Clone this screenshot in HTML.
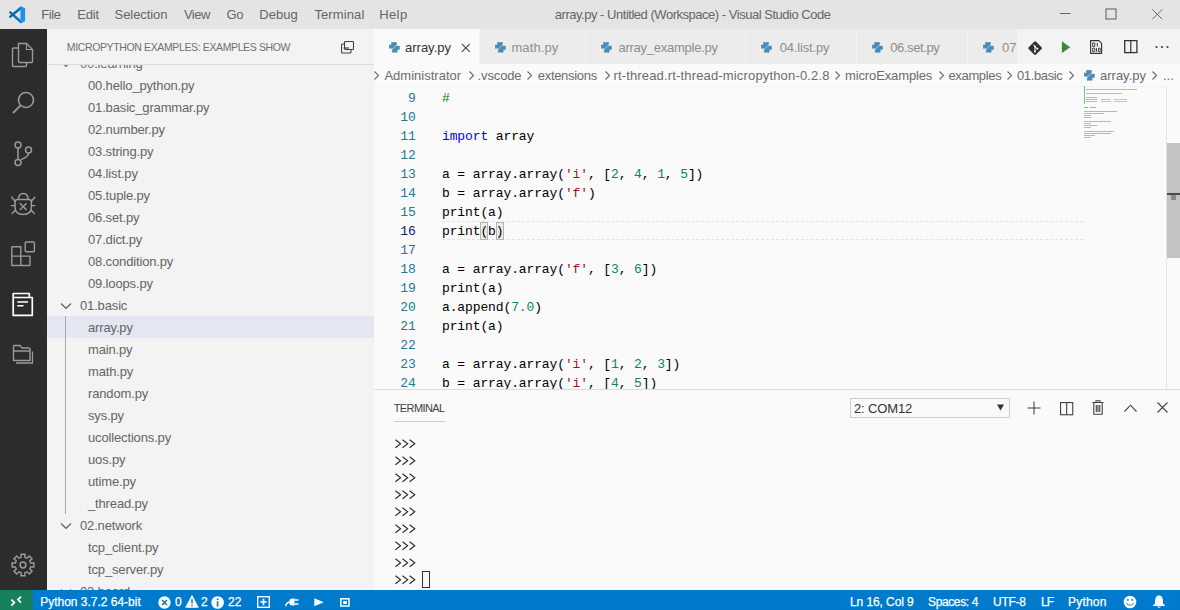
<!DOCTYPE html>
<html><head><meta charset="utf-8">
<style>
*{margin:0;padding:0;box-sizing:border-box}
html,body{width:1180px;height:610px;overflow:hidden;background:#fafafa;font-family:"Liberation Sans",sans-serif}
.abs{position:absolute}
svg{position:absolute;display:block}
#title{left:0;top:0;width:1180px;height:29px;background:#e4e4e4;color:#666;font-size:13px}
#title .m{position:absolute;top:7px;white-space:nowrap}
#act{left:0;top:29px;width:47px;height:561px;background:#2c2c2c}
#side{left:47px;top:29px;width:327px;height:561px;background:#f3f3f3;overflow:hidden}
#side .hdrbg{position:absolute;left:0;top:0;width:327px;height:35px;background:#f3f3f3;box-shadow:0 1px 1px #dedede;z-index:2}
#side .hdr{position:absolute;top:11.8px;font-size:10.5px;color:#717171;white-space:nowrap}
#side .row{position:absolute;height:22px;line-height:22px;font-size:13px;color:#656565;white-space:nowrap;letter-spacing:-0.15px}
#side .selrow{position:absolute;left:0;width:327px;height:22px;background:#e4e6f1}
#side .chev{position:absolute;left:13px}
#side .guide{position:absolute;left:18px;width:1px;background:#a9a9a9}
#tabs{left:374px;top:29px;width:806px;height:35px;background:#f3f3f3}
.tab{position:absolute;top:0;height:35px;background:#ececec;border-right:1px solid #f3f3f3;font-size:13px;color:#8e8e8e;line-height:35px;white-space:nowrap}
.tab span{position:absolute;top:0.7px}
.pyw{position:absolute;width:12px;height:13px}
#crumb{left:374px;top:64px;width:806px;height:22px;background:#fafafa;font-size:13px;color:#6c6c6c;line-height:22px;white-space:nowrap}
#crumb span{position:absolute;top:1px}
#crumb .gt{position:absolute;top:7px}
#code{left:374px;top:86px;width:806px;height:303px;background:#fafafa;overflow:hidden}
.ln{position:absolute;left:0;width:41.6px;text-align:right;font-family:"Liberation Mono",monospace;font-size:13px;letter-spacing:-0.12px;color:#237893;height:19px;line-height:19px}
.ln.cur{color:#0b216f}
.cl{position:absolute;left:68px;font-family:"Liberation Mono",monospace;font-size:13px;letter-spacing:-0.12px;color:#000;height:19px;line-height:19px;white-space:pre}
.k{color:#0000ff}.s{color:#a31515}.n{color:#09885a}.c{color:#008000}
#panel{left:374px;top:389px;width:806px;height:201px;background:#fafafa;border-top:1px solid #dcdcdc}
.tl{position:absolute;left:21px;font-family:"Liberation Mono",monospace;font-size:13px;letter-spacing:-0.12px;color:#333;height:17px;line-height:17px;white-space:pre}
#status{left:0;top:590px;width:1180px;height:20px;background:#007acc;color:#fff;font-size:12px;line-height:20px;white-space:nowrap}
#status span{position:absolute;top:1.5px;-webkit-text-stroke:0.25px #fff}
</style></head><body>

<div id="title" class="abs">
  <svg style="left:4px;top:2.7px" width="26" height="26" viewBox="0 0 26 26"><path d="M6.3 9.4 L17 19" stroke="#0a74c4" stroke-width="2.5" stroke-linecap="round"/><path d="M6.3 13.6 L17 4.8" stroke="#0868b0" stroke-width="2.5" stroke-linecap="round"/><path d="M16.4 4.3 L18 3.7 L21.1 5.2 V18.3 L18 19.8 L16.4 19.3 Z" fill="#1c93e8"/></svg>
  <span class="m" style="left:41.20px;letter-spacing:-0.400px">File</span>
  <span class="m" style="left:77.30px;letter-spacing:-0.233px">Edit</span>
  <span class="m" style="left:114.60px;letter-spacing:-0.075px">Selection</span>
  <span class="m" style="left:183.90px;letter-spacing:-0.467px">View</span>
  <span class="m" style="left:226.60px;letter-spacing:-0.400px">Go</span>
  <span class="m" style="left:259.20px;letter-spacing:0.075px">Debug</span>
  <span class="m" style="left:314.40px;letter-spacing:0.114px">Terminal</span>
  <span class="m" style="left:379.20px;letter-spacing:0.400px">Help</span>
  <span class="m" style="left:554.80px;letter-spacing:-0.478px">array.py - Untitled (Workspace) - Visual Studio Code</span>
  <svg style="left:1060px;top:13px" width="11" height="2"><rect width="10.5" height="1" fill="#666"/></svg>
  <svg style="left:1105px;top:8px" width="12" height="12"><rect x="1" y="1" width="10" height="10" fill="none" stroke="#666" stroke-width="1.1"/></svg>
  <svg style="left:1152px;top:9px" width="11" height="11"><path d="M0.3 0.3 L10.3 10.3 M10.3 0.3 L0.3 10.3" stroke="#666" stroke-width="1"/></svg>
</div>

<div id="act" class="abs">
  <!-- explorer -->
  <svg style="left:11px;top:13px" width="24" height="26" viewBox="0 0 24 26"><path d="M7.5 1.5 H15.5 L21.5 7.5 V19.5 Q21.5 20.5 20.5 20.5 H8.5 Q7.5 20.5 7.5 19.5 Z" fill="none" stroke="#999" stroke-width="1.4"/><path d="M15.5 1.5 V7.5 H21.5" fill="none" stroke="#999" stroke-width="1.2"/><path d="M7.5 6 H2.5 Q1.5 6 1.5 7 V23.5 Q1.5 24.5 2.5 24.5 H14.5 Q15.5 24.5 15.5 23.5 V20.5" fill="none" stroke="#999" stroke-width="1.4"/></svg>
  <!-- search -->
  <svg style="left:11px;top:60px" width="26" height="26" viewBox="0 0 26 26"><circle cx="15" cy="11" r="7.5" fill="none" stroke="#999" stroke-width="1.6"/><path d="M9.6 16.4 L2 24" stroke="#999" stroke-width="1.8"/></svg>
  <!-- scm -->
  <svg style="left:11px;top:110px" width="24" height="28" viewBox="0 0 24 28"><circle cx="7" cy="6" r="3" fill="none" stroke="#999" stroke-width="1.5"/><circle cx="17.5" cy="11" r="3" fill="none" stroke="#999" stroke-width="1.5"/><circle cx="7" cy="23.4" r="3" fill="none" stroke="#999" stroke-width="1.5"/><path d="M7 9 V20.4 M17.5 14 Q17.5 18 10 20.6" fill="none" stroke="#999" stroke-width="1.5"/></svg>
  <!-- debug -->
  <svg style="left:10px;top:162px" width="27" height="26" viewBox="0 0 27 26"><path d="M8.3 9 Q8.3 2.6 13.2 2.6 Q18.1 2.6 18.1 9" fill="none" stroke="#999" stroke-width="1.5"/><path d="M5 11 Q5 8.6 7.5 8.6 H19 Q21.4 8.6 21.4 11 V16 Q21.4 23.5 13.2 23.5 Q5 23.5 5 16 Z" fill="none" stroke="#999" stroke-width="1.5"/><path d="M9.8 12.2 L16.6 19 M16.6 12.2 L9.8 19" stroke="#999" stroke-width="1.5"/><path d="M5.2 10.5 L1.3 5.8 M21.2 10.5 L25.1 5.8 M5 14.6 H1 M21.4 14.6 H25.4 M5.6 18.8 L1.8 23 M20.8 18.8 L24.6 23" stroke="#999" stroke-width="1.4"/></svg>
  <!-- extensions -->
  <svg style="left:10px;top:211px" width="26" height="27" viewBox="0 0 26 27"><path d="M1.8 6.7 H10.8 V16.1 H1.8 Z M1.8 16.1 H10.8 V25.5 H1.8 Z M10.8 16.1 H20 V25.5 H10.8 Z" fill="none" stroke="#999" stroke-width="1.4" stroke-linejoin="round"/><rect x="15.2" y="2" width="9.2" height="9.8" rx="1" fill="none" stroke="#999" stroke-width="1.4"/></svg>
  <!-- active: micropython -->
  <svg style="left:11px;top:262px" width="24" height="26" viewBox="0 0 24 26"><path d="M2.2 24.4 V2.5 H18.3 V6.5 H21.3 V24.4 Z M2.2 6.5 H21.3" fill="none" stroke="#fff" stroke-width="1.7" stroke-linejoin="round"/><path d="M6.3 11 H17 M6.3 14.8 H12.5" stroke="#fff" stroke-width="1.6"/></svg>
  <!-- folder -->
  <svg style="left:11px;top:314px" width="24" height="22" viewBox="0 0 24 22"><path d="M2.5 17.5 V3.5 Q2.5 2.5 3.5 2.5 H9 L11 5 H18 Q19 5 19 6 V17.5 Z M2.5 8 H19" fill="none" stroke="#999" stroke-width="1.4"/><path d="M5 20 H21.5 V8.5" fill="none" stroke="#999" stroke-width="1.3"/></svg>
  <!-- gear -->
  <svg style="left:10px;top:523px" width="26" height="26" viewBox="0 0 26 26"><path d="M11.09 5.33 L11.09 2.17 L14.91 2.17 L14.91 5.33 L17.07 6.23 L19.31 3.99 L22.01 6.69 L19.77 8.93 L20.67 11.09 L23.83 11.09 L23.83 14.91 L20.67 14.91 L19.77 17.07 L22.01 19.31 L19.31 22.01 L17.07 19.77 L14.91 20.67 L14.91 23.83 L11.09 23.83 L11.09 20.67 L8.93 19.77 L6.69 22.01 L3.99 19.31 L6.23 17.07 L5.33 14.91 L2.17 14.91 L2.17 11.09 L5.33 11.09 L6.23 8.93 L3.99 6.69 L6.69 3.99 L8.93 6.23 Z" fill="none" stroke="#999" stroke-width="1.5" stroke-linejoin="miter"/><circle cx="13" cy="13" r="2.9" fill="none" stroke="#999" stroke-width="1.5"/></svg>
</div>

<div id="side" class="abs">
  <svg class="chev" style="top:31px" width="12" height="8" viewBox="0 0 12 8"><path d="M1 1.5 L6 6.3 L11 1.5" fill="none" stroke="#646465" stroke-width="1.2"/></svg>
<div class="row" style="left:33px;top:24px">00.learning</div>
<div class="row" style="left:41px;top:46px">00.hello_python.py</div>
<div class="row" style="left:41px;top:68px">01.basic_grammar.py</div>
<div class="row" style="left:41px;top:90px">02.number.py</div>
<div class="row" style="left:41px;top:112px">03.string.py</div>
<div class="row" style="left:41px;top:134px">04.list.py</div>
<div class="row" style="left:41px;top:156px">05.tuple.py</div>
<div class="row" style="left:41px;top:178px">06.set.py</div>
<div class="row" style="left:41px;top:200px">07.dict.py</div>
<div class="row" style="left:41px;top:222px">08.condition.py</div>
<div class="row" style="left:41px;top:244px">09.loops.py</div>
<svg class="chev" style="top:273px" width="12" height="8" viewBox="0 0 12 8"><path d="M1 1.5 L6 6.3 L11 1.5" fill="none" stroke="#646465" stroke-width="1.2"/></svg>
<div class="row" style="left:33px;top:266px">01.basic</div>
<div class="selrow" style="top:287px"></div>
<div class="row" style="left:41px;top:288px">array.py</div>
<div class="row" style="left:41px;top:310px">main.py</div>
<div class="row" style="left:41px;top:332px">math.py</div>
<div class="row" style="left:41px;top:354px">random.py</div>
<div class="row" style="left:41px;top:376px">sys.py</div>
<div class="row" style="left:41px;top:398px">ucollections.py</div>
<div class="row" style="left:41px;top:420px">uos.py</div>
<div class="row" style="left:41px;top:442px">utime.py</div>
<div class="row" style="left:41px;top:464px">_thread.py</div>
<svg class="chev" style="top:493px" width="12" height="8" viewBox="0 0 12 8"><path d="M1 1.5 L6 6.3 L11 1.5" fill="none" stroke="#646465" stroke-width="1.2"/></svg>
<div class="row" style="left:33px;top:486px">02.network</div>
<div class="row" style="left:41px;top:508px">tcp_client.py</div>
<div class="row" style="left:41px;top:530px">tcp_server.py</div>
<svg class="chev" style="top:559px" width="12" height="8" viewBox="0 0 12 8"><path d="M1 1.5 L6 6.3 L11 1.5" fill="none" stroke="#646465" stroke-width="1.2"/></svg>
<div class="row" style="left:33px;top:552px">03.board</div>
  <div class="guide" style="top:287px;height:198px"></div>
  <div class="hdrbg"></div>
  <div class="hdr" style="z-index:3;left:19.80px;letter-spacing:-0.371px">MICROPYTHON EXAMPLES: EXAMPLES SHOW</div>
  <svg style="left:294px;top:12px;z-index:3" width="14" height="13" viewBox="0 0 14 13"><rect x="3.5" y="0.5" width="9" height="8" rx="1" fill="none" stroke="#424242" stroke-width="1.1"/><path d="M3.5 3 H1.5 Q0.5 3 0.5 4 V11 Q0.5 12 1.5 12 H9 Q10 12 10 11 V8.5" fill="none" stroke="#424242" stroke-width="1.1"/><path d="M2.5 7 H8" stroke="#424242" stroke-width="1.2"/></svg>
</div>

<div id="tabs" class="abs">
  <div class="tab" style="left:0;width:106px;background:#fafafa;color:#333"><div class="pyw" style="left:14.7px;top:12.8px"><svg width="12" height="12" viewBox="0 0 12 12"><g transform="scale(1 0.91) translate(-0.5 -0.6)"><path d="M3 0.8 H8 V3.7 L4.1 7.6 H0.7 V3.8 H3 Z" fill="#4a8cb8" stroke="#4a8cb8" stroke-width="0.5" stroke-linejoin="round"/><path d="M8.7 11.9 H3.7 V9 L7.6 5.1 H11 V8.9 H8.7 Z" fill="#4a8cb8" stroke="#4a8cb8" stroke-width="0.5" stroke-linejoin="round"/></g></svg></div><span style="left:31.00px;letter-spacing:0.000px">array.py</span>
    <svg style="left:87px;top:14px" width="10" height="10"><path d="M0.8 0.8 L8.8 8.8 M8.8 0.8 L0.8 8.8" stroke="#444" stroke-width="1.05"/></svg></div>
  <div class="tab" style="left:106px;width:106px"><div class="pyw" style="left:14.7px;top:12.8px"><svg width="12" height="12" viewBox="0 0 12 12"><g transform="scale(1 0.91) translate(-0.5 -0.6)"><path d="M3 0.8 H8 V3.7 L4.1 7.6 H0.7 V3.8 H3 Z" fill="#4a8cb8" stroke="#4a8cb8" stroke-width="0.5" stroke-linejoin="round"/><path d="M8.7 11.9 H3.7 V9 L7.6 5.1 H11 V8.9 H8.7 Z" fill="#4a8cb8" stroke="#4a8cb8" stroke-width="0.5" stroke-linejoin="round"/></g></svg></div><span style="left:31.40px;letter-spacing:0.117px">math.py</span></div>
  <div class="tab" style="left:212px;width:160px"><div class="pyw" style="left:14.7px;top:12.8px"><svg width="12" height="12" viewBox="0 0 12 12"><g transform="scale(1 0.91) translate(-0.5 -0.6)"><path d="M3 0.8 H8 V3.7 L4.1 7.6 H0.7 V3.8 H3 Z" fill="#4a8cb8" stroke="#4a8cb8" stroke-width="0.5" stroke-linejoin="round"/><path d="M8.7 11.9 H3.7 V9 L7.6 5.1 H11 V8.9 H8.7 Z" fill="#4a8cb8" stroke="#4a8cb8" stroke-width="0.5" stroke-linejoin="round"/></g></svg></div><span style="left:32.50px;letter-spacing:-0.260px">array_example.py</span></div>
  <div class="tab" style="left:372px;width:111px"><div class="pyw" style="left:14.7px;top:12.8px"><svg width="12" height="12" viewBox="0 0 12 12"><g transform="scale(1 0.91) translate(-0.5 -0.6)"><path d="M3 0.8 H8 V3.7 L4.1 7.6 H0.7 V3.8 H3 Z" fill="#4a8cb8" stroke="#4a8cb8" stroke-width="0.5" stroke-linejoin="round"/><path d="M8.7 11.9 H3.7 V9 L7.6 5.1 H11 V8.9 H8.7 Z" fill="#4a8cb8" stroke="#4a8cb8" stroke-width="0.5" stroke-linejoin="round"/></g></svg></div><span style="left:33.70px;letter-spacing:-0.167px">04.list.py</span></div>
  <div class="tab" style="left:483px;width:111px"><div class="pyw" style="left:14.7px;top:12.8px"><svg width="12" height="12" viewBox="0 0 12 12"><g transform="scale(1 0.91) translate(-0.5 -0.6)"><path d="M3 0.8 H8 V3.7 L4.1 7.6 H0.7 V3.8 H3 Z" fill="#4a8cb8" stroke="#4a8cb8" stroke-width="0.5" stroke-linejoin="round"/><path d="M8.7 11.9 H3.7 V9 L7.6 5.1 H11 V8.9 H8.7 Z" fill="#4a8cb8" stroke="#4a8cb8" stroke-width="0.5" stroke-linejoin="round"/></g></svg></div><span style="left:33.20px;letter-spacing:-0.400px">06.set.py</span></div>
  <div class="tab" style="left:594px;width:49px;border-right:none"><div class="pyw" style="left:14.7px;top:12.8px"><svg width="12" height="12" viewBox="0 0 12 12"><g transform="scale(1 0.91) translate(-0.5 -0.6)"><path d="M3 0.8 H8 V3.7 L4.1 7.6 H0.7 V3.8 H3 Z" fill="#4a8cb8" stroke="#4a8cb8" stroke-width="0.5" stroke-linejoin="round"/><path d="M8.7 11.9 H3.7 V9 L7.6 5.1 H11 V8.9 H8.7 Z" fill="#4a8cb8" stroke="#4a8cb8" stroke-width="0.5" stroke-linejoin="round"/></g></svg></div><span style="left:34px">07</span></div>
  <div style="position:absolute;left:643px;top:0;width:163px;height:35px;background:#f3f3f3"></div>
  <!-- git icon -->
  <svg style="left:653px;top:11px" width="16" height="16" viewBox="0 0 16 16"><path d="M8 0.3 L15.4 7.7 Q8 15.5 8 15.5 L0.6 8.3 Z" fill="none"/><rect x="2.9" y="2.9" width="10.4" height="10.4" rx="1.3" transform="rotate(45 8.1 8.1)" fill="#2f2f2f"/><path d="M6.2 4.6 L10.3 8.7 M8 6.4 V11.6" stroke="#fff" stroke-width="1"/><circle cx="8" cy="6.4" r="1" fill="#fff"/><circle cx="10.3" cy="8.7" r="1" fill="#fff"/><circle cx="8" cy="11.4" r="1" fill="#fff"/></svg>
  <!-- run -->
  <svg style="left:687px;top:12px" width="11" height="13" viewBox="0 0 11 13"><path d="M0.9 0.2 L9.2 6.2 L0.9 12.1 Z" fill="#388a34"/></svg>
  <!-- preview -->
  <svg style="left:716px;top:11px" width="13" height="14" viewBox="0 0 13 14"><path d="M0.6 0.6 H8.8 L11.6 3.4 V13.4 H0.6 Z" fill="none" stroke="#333" stroke-width="1.1"/><path d="M2.6 3 H4.8 V6.4 H2.6 Z M2.6 8.2 H4.8 V11.6 H2.6 Z M8.5 8.2 H10.2 V11.6 H8.5 Z" fill="none" stroke="#333" stroke-width="0.9"/><path d="M7.3 3 V6.5 M6.5 8.2 V11.6" stroke="#333" stroke-width="1"/></svg>
  <!-- split -->
  <svg style="left:750px;top:11px" width="14" height="14" viewBox="0 0 14 14"><rect x="0.7" y="0.6" width="12.2" height="12" fill="none" stroke="#333" stroke-width="1.3"/><path d="M6.8 0.6 V12.6" stroke="#333" stroke-width="1.2"/></svg>
  <!-- more -->
  <svg style="left:781px;top:16px" width="14" height="4"><circle cx="1.5" cy="2" r="1.1" fill="#424242"/><circle cx="7" cy="2" r="1.1" fill="#424242"/><circle cx="12.5" cy="2" r="1.1" fill="#424242"/></svg>
</div>

<div id="crumb" class="abs">
  <svg class="gt" style="left:0px" width="6" height="9"><path d="M0.5 0.5 L4.5 4.5 L0.5 8.5" fill="none" stroke="#6c6c6c" stroke-width="1.1"/></svg>
  <span style="left:10.40px;letter-spacing:0.008px">Administrator</span>
  <svg class="gt" style="left:95px" width="6" height="9"><path d="M0.5 0.5 L4.5 4.5 L0.5 8.5" fill="none" stroke="#6c6c6c" stroke-width="1.1"/></svg>
  <span style="left:103.50px;letter-spacing:-0.117px">.vscode</span>
  <svg class="gt" style="left:153px" width="6" height="9"><path d="M0.5 0.5 L4.5 4.5 L0.5 8.5" fill="none" stroke="#6c6c6c" stroke-width="1.1"/></svg>
  <span style="left:163.80px;letter-spacing:-0.311px">extensions</span>
  <svg class="gt" style="left:231px" width="6" height="9"><path d="M0.5 0.5 L4.5 4.5 L0.5 8.5" fill="none" stroke="#6c6c6c" stroke-width="1.1"/></svg>
  <span style="left:239.40px;letter-spacing:0.161px">rt-thread.rt-thread-micropython-0.2.8</span>
  <svg class="gt" style="left:461px" width="6" height="9"><path d="M0.5 0.5 L4.5 4.5 L0.5 8.5" fill="none" stroke="#6c6c6c" stroke-width="1.1"/></svg>
  <span style="left:471.00px;letter-spacing:-0.125px">microExamples</span>
  <svg class="gt" style="left:565px" width="6" height="9"><path d="M0.5 0.5 L4.5 4.5 L0.5 8.5" fill="none" stroke="#6c6c6c" stroke-width="1.1"/></svg>
  <span style="left:574.50px;letter-spacing:-0.357px">examples</span>
  <svg class="gt" style="left:633px" width="6" height="9"><path d="M0.5 0.5 L4.5 4.5 L0.5 8.5" fill="none" stroke="#6c6c6c" stroke-width="1.1"/></svg>
  <span style="left:643.00px;letter-spacing:-0.371px">01.basic</span>
  <svg class="gt" style="left:695px" width="6" height="9"><path d="M0.5 0.5 L4.5 4.5 L0.5 8.5" fill="none" stroke="#6c6c6c" stroke-width="1.1"/></svg>
  <div class="pyw" style="left:710px;top:6px"><svg width="12" height="12" viewBox="0 0 12 12"><g transform="scale(1 0.91) translate(-0.5 -0.6)"><path d="M3 0.8 H8 V3.7 L4.1 7.6 H0.7 V3.8 H3 Z" fill="#4a8cb8" stroke="#4a8cb8" stroke-width="0.5" stroke-linejoin="round"/><path d="M8.7 11.9 H3.7 V9 L7.6 5.1 H11 V8.9 H8.7 Z" fill="#4a8cb8" stroke="#4a8cb8" stroke-width="0.5" stroke-linejoin="round"/></g></svg></div>
  <span style="left:726.00px;letter-spacing:0.000px">array.py</span>
  <svg class="gt" style="left:778px" width="6" height="9"><path d="M0.5 0.5 L4.5 4.5 L0.5 8.5" fill="none" stroke="#6c6c6c" stroke-width="1.1"/></svg>
  <span style="left:789px">...</span>
</div>

<div id="code" class="abs">
  <div style="position:absolute;left:0;top:0;width:792px;height:1px;background:#f0f3f0"></div>
  <div style="position:absolute;left:68px;top:135px;width:641px;height:19px;border-top:1px dashed #dbe7db;border-bottom:1px dashed #dbe7db"></div>
  <div style="position:absolute;left:106.4px;top:135.5px;width:7.6px;height:18px;background:#e7ece7;border:1px solid #b4b4b4"></div>
  <div style="position:absolute;left:122px;top:135.5px;width:7.6px;height:18px;background:#e7ece7;border:1px solid #b4b4b4"></div>
  <div class="ln" style="top:3px">9</div>
<div class="cl" style="top:3px"><span class="c">#</span></div>
<div class="ln" style="top:22px">10</div>
<div class="cl" style="top:22px"></div>
<div class="ln" style="top:41px">11</div>
<div class="cl" style="top:41px"><span class="k">import</span> array</div>
<div class="ln" style="top:60px">12</div>
<div class="cl" style="top:60px"></div>
<div class="ln" style="top:79px">13</div>
<div class="cl" style="top:79px">a = array.array(<span class="s">'i'</span>, [<span class="n">2</span>, <span class="n">4</span>, <span class="n">1</span>, <span class="n">5</span>])</div>
<div class="ln" style="top:98px">14</div>
<div class="cl" style="top:98px">b = array.array(<span class="s">'f'</span>)</div>
<div class="ln" style="top:117px">15</div>
<div class="cl" style="top:117px">print(a)</div>
<div class="ln cur" style="top:136px">16</div>
<div class="cl" style="top:136px">print(b)</div>
<div class="ln" style="top:155px">17</div>
<div class="cl" style="top:155px"></div>
<div class="ln" style="top:174px">18</div>
<div class="cl" style="top:174px">a = array.array(<span class="s">'f'</span>, [<span class="n">3</span>, <span class="n">6</span>])</div>
<div class="ln" style="top:193px">19</div>
<div class="cl" style="top:193px">print(a)</div>
<div class="ln" style="top:212px">20</div>
<div class="cl" style="top:212px">a.append(<span class="n">7.0</span>)</div>
<div class="ln" style="top:231px">21</div>
<div class="cl" style="top:231px">print(a)</div>
<div class="ln" style="top:250px">22</div>
<div class="cl" style="top:250px"></div>
<div class="ln" style="top:269px">23</div>
<div class="cl" style="top:269px">a = array.array(<span class="s">'i'</span>, [<span class="n">1</span>, <span class="n">2</span>, <span class="n">3</span>])</div>
<div class="ln" style="top:288px">24</div>
<div class="cl" style="top:288px">b = array.array(<span class="s">'i'</span>, [<span class="n">4</span>, <span class="n">5</span>])</div>
  <!-- minimap -->
  <div style="position:absolute;left:710px;top:0px;width:1px;height:18px;background:#7cc47c"></div>
  <div style="position:absolute;left:712px;top:3px;width:51px;height:1px;background:#9ccf9c"></div>
  <div style="position:absolute;left:712px;top:7px;width:36px;height:1px;background:#9ccf9c"></div>
  <div style="position:absolute;left:712px;top:11px;width:11px;height:1px;background:#9ccf9c"></div>
  <div style="position:absolute;left:712px;top:13px;width:11px;height:1px;background:#9ccf9c"></div>
  <div style="position:absolute;left:727px;top:13px;width:9px;height:1px;background:#a9d6a9"></div>
  <div style="position:absolute;left:740px;top:13px;width:13px;height:1px;background:#a9d6a9"></div>
  <div style="position:absolute;left:712px;top:15px;width:11px;height:1px;background:#9ccf9c"></div>
  <div style="position:absolute;left:727px;top:15px;width:10px;height:1px;background:#a9d6a9"></div>
  <div style="position:absolute;left:740px;top:15px;width:13px;height:1px;background:#a9d6a9"></div>
  <div style="position:absolute;left:710px;top:21px;width:4px;height:1px;background:#8c9cf0"></div>
  <div style="position:absolute;left:716px;top:21px;width:6px;height:1px;background:#b0b0b0"></div>
  <div style="position:absolute;left:710px;top:25px;width:33px;height:1px;background:#b8b8b8"></div>
  <div style="position:absolute;left:710px;top:27px;width:20px;height:1px;background:#b8b8b8"></div>
  <div style="position:absolute;left:710px;top:29px;width:7px;height:1px;background:#b8b8b8"></div>
  <div style="position:absolute;left:710px;top:31px;width:7px;height:1px;background:#b8b8b8"></div>
  <div style="position:absolute;left:710px;top:35px;width:27px;height:1px;background:#b8b8b8"></div>
  <div style="position:absolute;left:710px;top:37px;width:7px;height:1px;background:#b8b8b8"></div>
  <div style="position:absolute;left:710px;top:39px;width:13px;height:1px;background:#b8b8b8"></div>
  <div style="position:absolute;left:710px;top:41px;width:7px;height:1px;background:#b8b8b8"></div>
  <div style="position:absolute;left:710px;top:45px;width:30px;height:1px;background:#b8b8b8"></div>
  <div style="position:absolute;left:710px;top:47px;width:27px;height:1px;background:#b8b8b8"></div>
  <div style="position:absolute;left:710px;top:49px;width:11px;height:1px;background:#b8b8b8"></div>
  <div style="position:absolute;left:710px;top:51px;width:7px;height:1px;background:#b8b8b8"></div>
  <!-- scrollbar -->
  <div style="position:absolute;left:792px;top:0;width:1px;height:303px;background:#e6e6e6"></div>
  <div style="position:absolute;left:793px;top:57px;width:13px;height:115px;background:#c3c3c3"></div>
  <div style="position:absolute;left:793px;top:107px;width:13px;height:2px;background:#4a4a4a"></div>
  <div style="position:absolute;left:797px;top:109px;width:5px;height:5px;background:#8a8a8a"></div>
</div>

<div id="panel" class="abs">
  <span style="position:absolute;left:19.70px;letter-spacing:-0.586px;top:12px;font-size:11px;color:#424242">TERMINAL</span>
  <div style="position:absolute;left:20px;top:31px;width:51px;height:1px;background:#cdcdcd"></div>
  <svg style="left:21px;top:49px" width="22" height="150" viewBox="0 0 22 150"><path d="M0.4 0.8 L5.6 4.8 L0.4 8.8 M7.5 0.8 L12.7 4.8 L7.5 8.8 M14.6 0.8 L19.8 4.8 L14.6 8.8 M0.4 17.8 L5.6 21.8 L0.4 25.8 M7.5 17.8 L12.7 21.8 L7.5 25.8 M14.6 17.8 L19.8 21.8 L14.6 25.8 M0.4 34.8 L5.6 38.8 L0.4 42.8 M7.5 34.8 L12.7 38.8 L7.5 42.8 M14.6 34.8 L19.8 38.8 L14.6 42.8 M0.4 51.8 L5.6 55.8 L0.4 59.8 M7.5 51.8 L12.7 55.8 L7.5 59.8 M14.6 51.8 L19.8 55.8 L14.6 59.8 M0.4 68.8 L5.6 72.8 L0.4 76.8 M7.5 68.8 L12.7 72.8 L7.5 76.8 M14.6 68.8 L19.8 72.8 L14.6 76.8 M0.4 85.8 L5.6 89.8 L0.4 93.8 M7.5 85.8 L12.7 89.8 L7.5 93.8 M14.6 85.8 L19.8 89.8 L14.6 93.8 M0.4 102.8 L5.6 106.8 L0.4 110.8 M7.5 102.8 L12.7 106.8 L7.5 110.8 M14.6 102.8 L19.8 106.8 L14.6 110.8 M0.4 119.8 L5.6 123.8 L0.4 127.8 M7.5 119.8 L12.7 123.8 L7.5 127.8 M14.6 119.8 L19.8 123.8 L14.6 127.8 M0.4 136.8 L5.6 140.8 L0.4 144.8 M7.5 136.8 L12.7 140.8 L7.5 144.8 M14.6 136.8 L19.8 140.8 L14.6 144.8 " fill="none" stroke="#2a2a2a" stroke-width="1.1"/></svg>
  <div style="position:absolute;left:48px;top:181px;width:7.5px;height:16.5px;border:1px solid #333"></div>
  <div style="position:absolute;left:476px;top:8px;width:160px;height:20px;background:#fafafa;border:1px solid #cecece"></div>
  <span style="position:absolute;left:480.00px;letter-spacing:-0.143px;top:11px;font-size:13px;color:#333">2: COM12</span>
  <svg style="left:623px;top:14px" width="7" height="7"><path d="M0 0.5 H7 L3.5 6.5 Z" fill="#333"/></svg>
  <svg style="left:652.5px;top:11px" width="14" height="14"><path d="M7 0.5 V13.5 M0.5 7 H13.5" stroke="#424242" stroke-width="1.1"/></svg>
  <svg style="left:685.6px;top:12px" width="14" height="14"><rect x="0.55" y="0.55" width="12.2" height="12.2" fill="none" stroke="#424242" stroke-width="1.1"/><path d="M6.65 0.6 V12.8" stroke="#424242" stroke-width="1.1"/></svg>
  <svg style="left:718px;top:10px" width="12" height="15" viewBox="0 0 12 15"><path d="M0.5 2.5 H11.5 M4 2.5 V0.8 H8 V2.5 M1.8 2.5 V14.3 H10.2 V2.5 M4.3 5 V12 M6 5 V12 M7.7 5 V12" fill="none" stroke="#424242" stroke-width="1.1"/></svg>
  <svg style="left:750px;top:14px" width="13" height="8"><path d="M0.5 7.5 L6.5 1.2 L12.5 7.5" fill="none" stroke="#424242" stroke-width="1.1"/></svg>
  <svg style="left:783px;top:12px" width="11" height="11"><path d="M0.5 0.5 L10.5 10.5 M10.5 0.5 L0.5 10.5" stroke="#424242" stroke-width="1.1"/></svg>
</div>

<div id="status" class="abs">
  <div style="position:absolute;left:0;top:0;width:33px;height:20px;background:#16825d"></div>
  <svg style="left:10px;top:5px" width="13" height="12" viewBox="0 0 13 12"><path d="M1.3 4.6 L4.3 7.6 L1.3 10.6 M11 1.6 L8 4.6 L11 7.6" fill="none" stroke="#fff" stroke-width="1.8"/></svg>
  <span style="left:40.20px;letter-spacing:-0.011px">Python 3.7.2 64-bit</span>
  <svg style="left:158px;top:5.5px" width="13" height="13" viewBox="0 0 13 13"><circle cx="6.5" cy="6.5" r="6.2" fill="#fff"/><path d="M4 4 L9 9 M9 4 L4 9" stroke="#007acc" stroke-width="1.5"/></svg>
  <span style="left:174.90px;letter-spacing:0.000px">0</span>
  <svg style="left:184.5px;top:5px" width="14" height="13" viewBox="0 0 14 13"><path d="M7 0.3 L13.4 12.4 H0.6 Z" fill="#fff" stroke="#fff" stroke-width="0.6" stroke-linejoin="round"/><path d="M7 4.3 V8.6 M7 9.8 V11.2" stroke="#007acc" stroke-width="1.5"/></svg>
  <span style="left:201.00px;letter-spacing:0.000px">2</span>
  <svg style="left:211.4px;top:5.5px" width="14" height="13" viewBox="0 0 14 13"><circle cx="6.6" cy="6.5" r="6.3" fill="#fff"/><path d="M6.6 5.2 V10.6 M6.6 2.4 V4" stroke="#007acc" stroke-width="1.7"/></svg>
  <span style="left:228.00px;letter-spacing:0.000px">22</span>
  <svg style="left:257px;top:6px" width="13" height="12" viewBox="0 0 13 12"><rect x="0.7" y="0.7" width="11.6" height="10.6" fill="none" stroke="#fff" stroke-width="1.4"/><path d="M6.5 2.8 V9.2 M3.3 6 H9.7" stroke="#fff" stroke-width="1.7"/></svg>
  <svg style="left:285px;top:7.5px" width="14" height="9" viewBox="0 0 14 9"><path d="M4.5 1.8 Q5.5 0.4 8 0.4 H9.6 V7.6 H8 Q5.5 7.6 4.5 6.2 Z" fill="#fff"/><path d="M9.5 2 H13.5 M9.5 6 H13.5" stroke="#fff" stroke-width="1.3"/><path d="M4.8 4 Q2 4 0.4 8.2" fill="none" stroke="#fff" stroke-width="1.4"/></svg>
  <svg style="left:313.5px;top:7.5px" width="10" height="9" viewBox="0 0 10 9"><path d="M0.3 0.3 L9.8 4.2 L0.3 8.2 Z" fill="#fff"/></svg>
  <svg style="left:340px;top:7.5px" width="10" height="9" viewBox="0 0 10 9"><rect x="0.8" y="0.8" width="8.2" height="7.2" fill="none" stroke="#fff" stroke-width="1.5"/><rect x="3.2" y="3" width="3.6" height="3" fill="#fff"/></svg>
  <span style="left:850.00px;letter-spacing:-0.091px">Ln 16, Col 9</span>
  <span style="left:928.00px;letter-spacing:-0.375px">Spaces: 4</span>
  <span style="left:993.00px;letter-spacing:-0.250px">UTF-8</span>
  <span style="left:1041.00px;letter-spacing:-1.000px">LF</span>
  <span style="left:1068.00px;letter-spacing:0.200px">Python</span>
  <svg style="left:1122.8px;top:4.6px" width="14" height="14" viewBox="0 0 14 14"><circle cx="7" cy="7" r="6.3" fill="#fff"/><ellipse cx="4.9" cy="4.9" rx="0.8" ry="1.1" fill="#007acc"/><ellipse cx="9.1" cy="4.9" rx="0.8" ry="1.1" fill="#007acc"/><path d="M3.3 8.3 Q7 12 10.7 8.3" fill="none" stroke="#007acc" stroke-width="0.9"/></svg>
  <svg style="left:1151.5px;top:4.8px" width="14" height="14" viewBox="0 0 14 14"><path d="M7 0.2 Q3.4 0.8 3.1 5 L2.9 8.8 L1.1 10.3 V10.9 H12.9 V10.3 L11.1 8.8 L10.9 5 Q10.6 0.8 7 0.2 Z" fill="#fff"/><path d="M5 11.6 Q7 14 9 11.6 Z" fill="#fff"/></svg>
</div>

</body></html>
